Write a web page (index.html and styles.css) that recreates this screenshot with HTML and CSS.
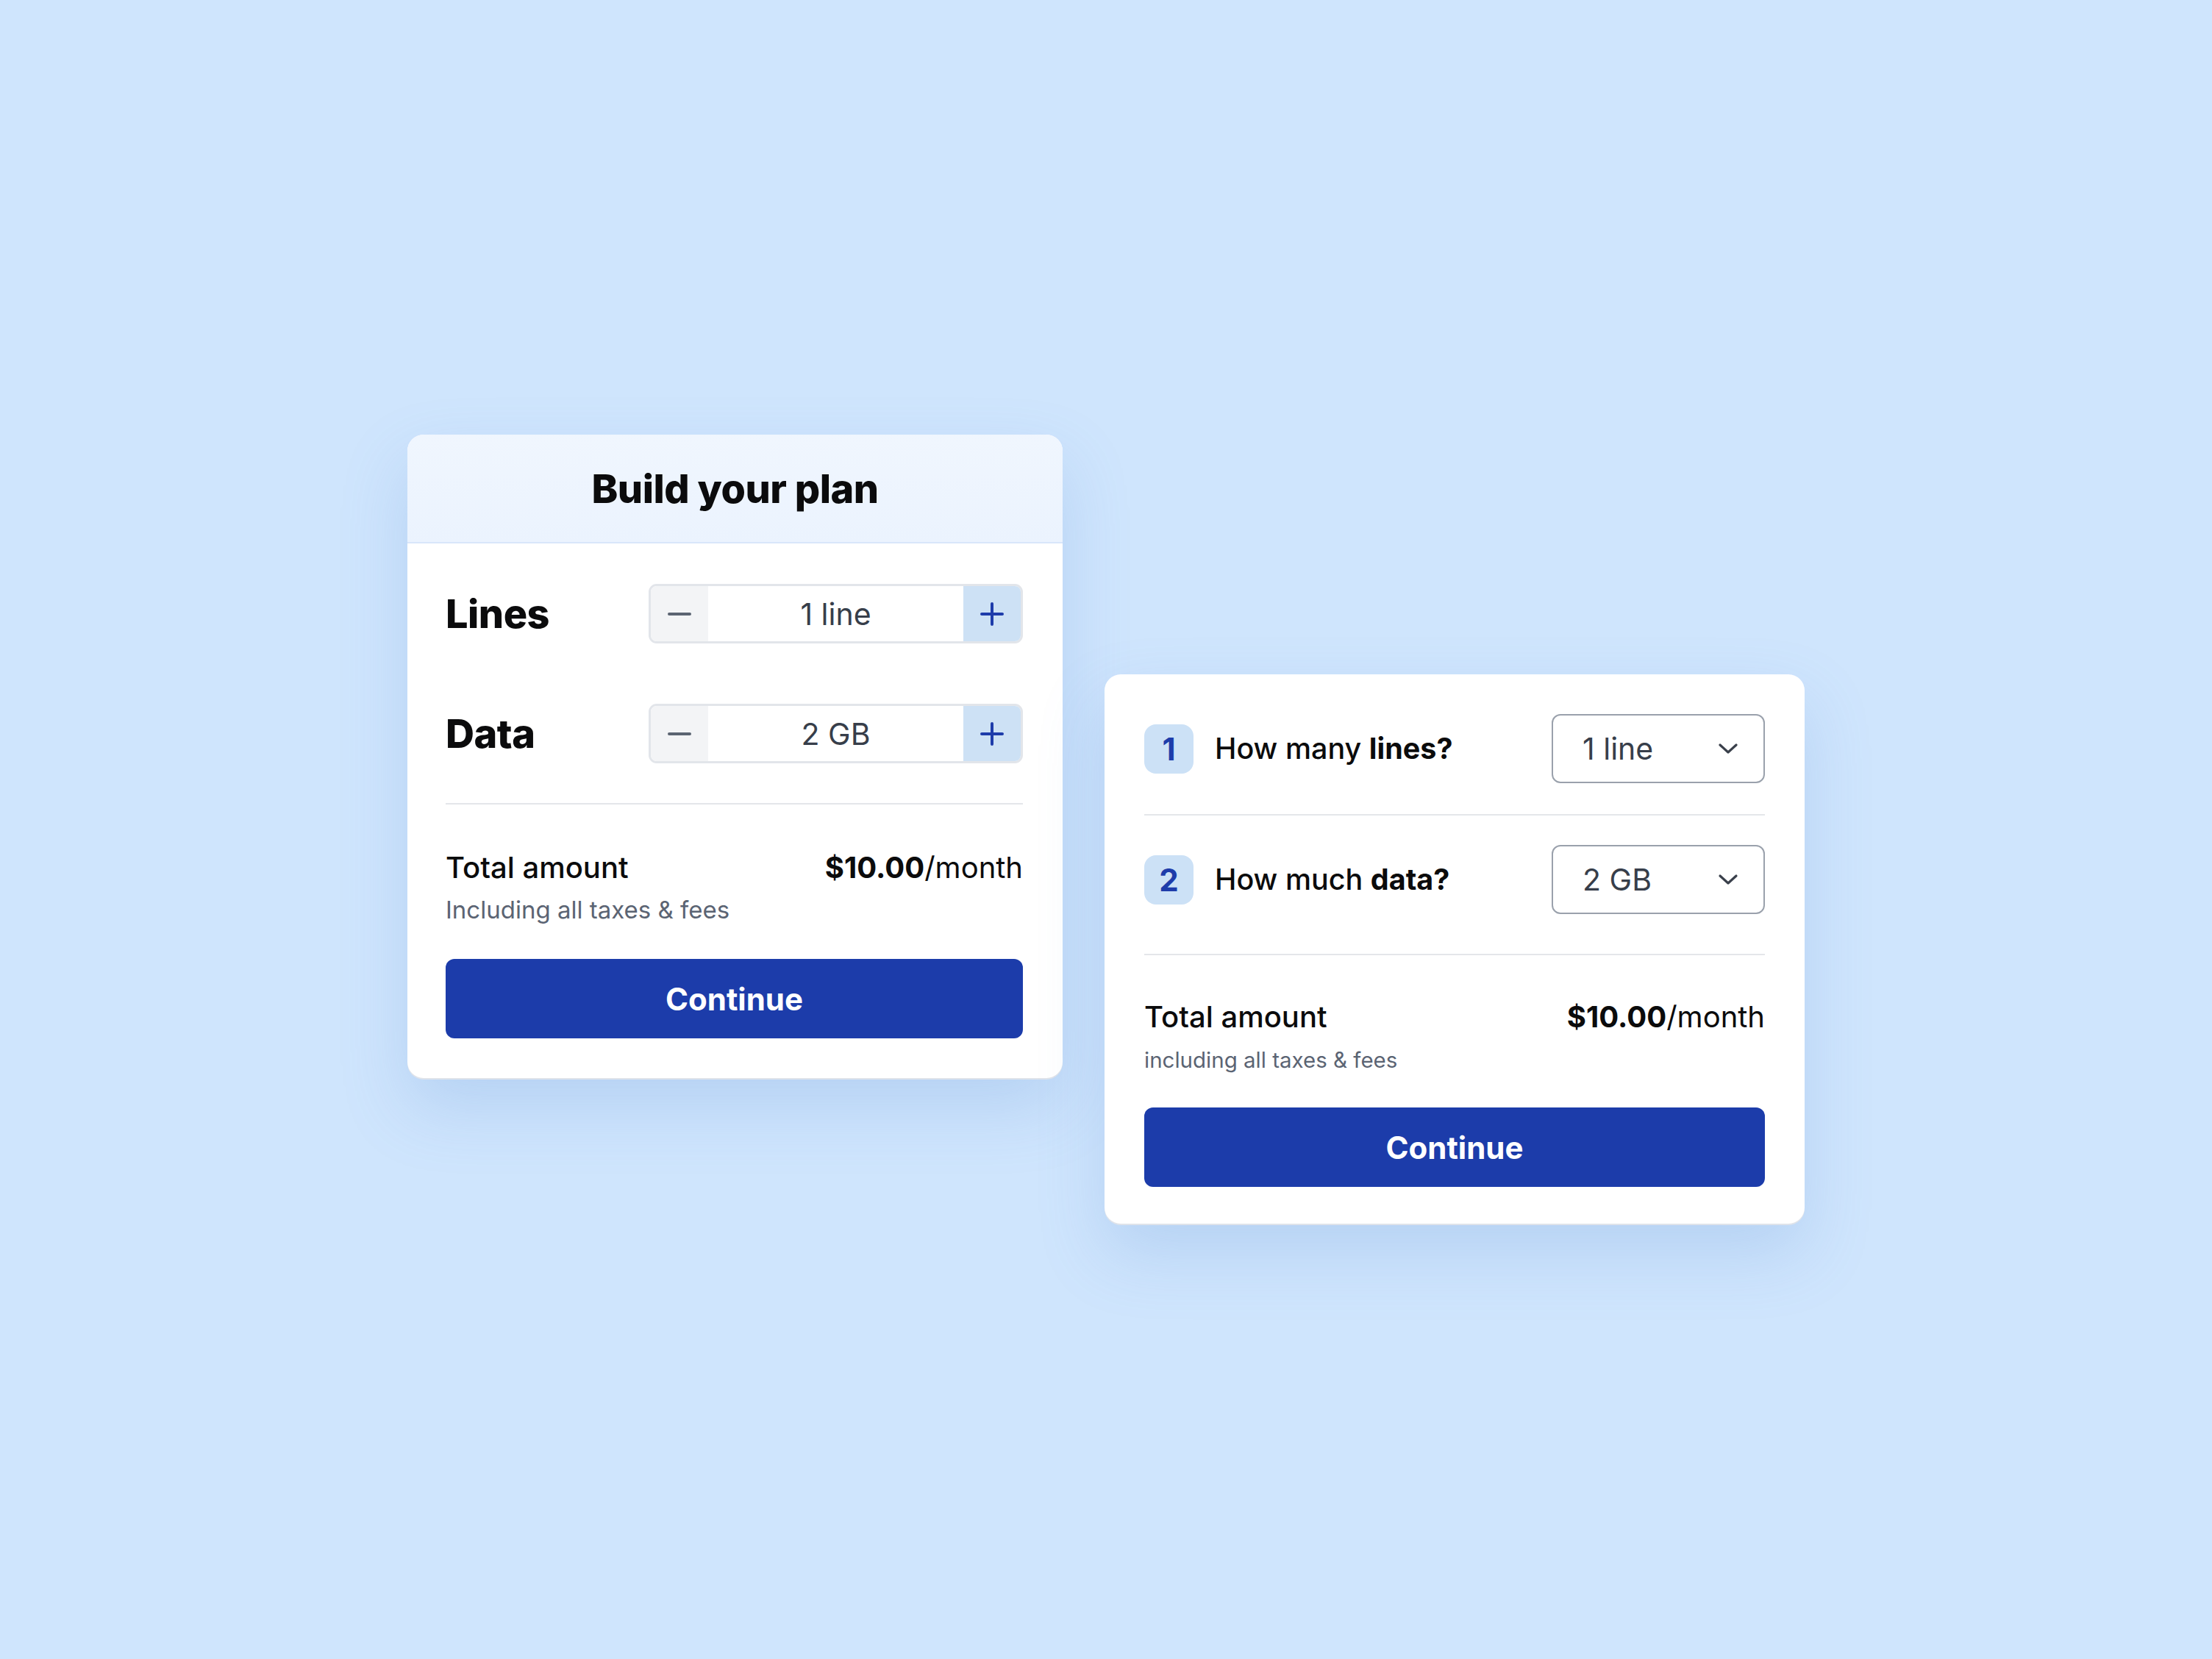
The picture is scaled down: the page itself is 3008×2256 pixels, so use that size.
FILE: index.html
```html
<!DOCTYPE html>
<html lang="en">
<head>
    <meta charset="UTF-8">
    <meta name="viewport" content="width=device-width, initial-scale=1.0">
    <title>Build your plan</title>
    <link rel="stylesheet" href="styles.css">
</head>
<body>
    <div class="stage">
        <!-- stepper version -->
        <div class="card plan-card">
            <div class="plan-header">
                <h2>Build your plan</h2>
            </div>
            <div class="plan-body">
                <div class="plan-row">
                    <span class="plan-label">Lines</span>
                    <div class="stepper">
                        <button class="step minus"><span class="bar"></span></button>
                        <span class="step-value">1 line</span>
                        <button class="step plus"><span class="bar"></span><span class="bar vert"></span></button>
                    </div>
                </div>
                <div class="plan-row">
                    <span class="plan-label">Data</span>
                    <div class="stepper">
                        <button class="step minus"><span class="bar"></span></button>
                        <span class="step-value">2 GB</span>
                        <button class="step plus"><span class="bar"></span><span class="bar vert"></span></button>
                    </div>
                </div>
                <hr class="divider">
                <div class="total">
                    <div class="total-line">
                        <span class="total-label">Total amount</span>
                        <span class="total-price"><b>$10.00</b>/month</span>
                    </div>
                    <p class="total-note">Including all taxes &amp; fees</p>
                </div>
                <button class="continue">Continue</button>
            </div>
        </div>

        <!-- dropdown version -->
        <div class="card steps-card">
            <div class="q-row">
                <span class="badge">1</span>
                <span class="q-text">How many <b>lines?</b></span>
                <div class="select">
                    <span>1 line</span>
                    <svg width="28" height="16" viewBox="0 0 28 16"><path d="M3 3 L14 13 L25 3" fill="none" stroke="#3a404b" stroke-width="3.2" stroke-linecap="round" stroke-linejoin="round"/></svg>
                </div>
            </div>
            <hr class="divider q-divider">
            <div class="q-row">
                <span class="badge">2</span>
                <span class="q-text">How much <b>data?</b></span>
                <div class="select">
                    <span>2 GB</span>
                    <svg width="28" height="16" viewBox="0 0 28 16"><path d="M3 3 L14 13 L25 3" fill="none" stroke="#3a404b" stroke-width="3.2" stroke-linecap="round" stroke-linejoin="round"/></svg>
                </div>
            </div>
            <hr class="divider q-divider last">
            <div class="total">
                <div class="total-line">
                    <span class="total-label">Total amount</span>
                    <span class="total-price"><b>$10.00</b>/month</span>
                </div>
                <p class="total-note small">including all taxes &amp; fees</p>
            </div>
            <button class="continue">Continue</button>
        </div>
    </div>
</body>
</html>
```

FILE: styles.css
```css
body {
    font-family: 'Inter', 'Noto Sans', sans-serif;
    background-color: #cfe5fd;
    color: #0b0b0c;
    margin: 0;
}
.stage {
    min-height: 2256px;
    display: flex;
    justify-content: center;
    align-items: center;
    gap: 57px;
}
.card {
    background-color: #ffffff;
    border-radius: 22px;
    box-shadow: 0 2px 0 #dfe3ea, 0 40px 90px rgba(90, 140, 210, 0.22);
    box-sizing: border-box;
}

/* ---- stepper card ---- */
.plan-card {
    width: 891px;
    align-self: flex-start;
    margin-top: 591px;
    overflow: hidden;
}
.plan-header {
    height: 146px;
    background: linear-gradient(#f0f6fe, #ebf3fe);
    border-bottom: 2px solid #d9e6fa;
    display: flex;
    align-items: center;
    justify-content: center;
}
.plan-header h2 {
    margin: 0;
    font-size: 54px;
    font-weight: 800;
    letter-spacing: -0.5px;
}
.plan-body {
    padding: 55px 54px 54px 52px;
}
.plan-row {
    display: flex;
    align-items: center;
    justify-content: space-between;
    margin-bottom: 82px;
}
.plan-row:nth-child(2) {
    margin-bottom: 54px;
}
.plan-label {
    font-size: 54px;
    font-weight: 800;
    letter-spacing: -0.5px;
}
.stepper {
    width: 509px;
    height: 81px;
    box-sizing: border-box;
    border: 3px solid #e2e5ea;
    border-radius: 11px;
    overflow: hidden;
    display: flex;
    align-items: stretch;
}
.step {
    width: 78px;
    border: none;
    padding: 0;
    position: relative;
    cursor: pointer;
}
.step.minus {
    background-color: #f3f4f6;
}
.step.plus {
    background-color: #cde1f5;
}
.bar {
    position: absolute;
    left: 50%;
    top: 50%;
    width: 32px;
    height: 4px;
    margin: -2px 0 0 -16px;
    border-radius: 2px;
    background-color: #5b6472;
}
.plus .bar {
    background-color: #1e3caa;
}
.bar.vert {
    width: 4px;
    height: 32px;
    margin: -16px 0 0 -2px;
}
.step-value {
    flex: 1;
    display: flex;
    align-items: center;
    justify-content: center;
    font-size: 41px;
    color: #373e4a;
}
.divider {
    border: none;
    height: 2px;
    background-color: #e4e6ea;
    margin: 0;
}
.total {
    margin-top: 62px;
}
.total-line {
    display: flex;
    justify-content: space-between;
    align-items: baseline;
    font-size: 40px;
    line-height: 48px;
}
.total-label {
    font-weight: 500;
}
.total-price b {
    font-weight: 700;
}
.total-note {
    margin: 13px 0 0;
    font-size: 33px;
    line-height: 40px;
    color: #5b6473;
}
.total-note.small {
    margin-top: 16px;
    font-size: 29.5px;
    line-height: 36px;
}
.continue {
    display: block;
    width: 100%;
    height: 108px;
    margin-top: 47px;
    background-color: #1c3caa;
    color: #ffffff;
    border: none;
    border-radius: 12px;
    font-family: inherit;
    font-size: 42px;
    font-weight: 700;
    cursor: pointer;
}

/* ---- dropdown card ---- */
.steps-card {
    width: 952px;
    align-self: flex-start;
    margin-top: 917px;
    padding: 54px 54px 50px;
}
.q-row {
    display: flex;
    align-items: center;
}
.badge {
    width: 67px;
    height: 67px;
    border-radius: 16px;
    background-color: #cce1f6;
    color: #1e3caa;
    font-size: 42px;
    font-weight: 700;
    display: flex;
    align-items: center;
    justify-content: center;
}
.q-text {
    flex: 1;
    margin-left: 29px;
    font-size: 39.5px;
    font-weight: 500;
}
.q-text b {
    font-weight: 700;
}
.select {
    width: 290px;
    height: 94px;
    box-sizing: border-box;
    border: 2px solid #9aa1ac;
    border-radius: 12px;
    padding: 0 34px 0 40px;
    display: flex;
    align-items: center;
    justify-content: space-between;
    font-size: 41px;
    color: #373e4a;
}
.q-divider {
    margin: 42px 0 40px;
}
.q-divider.last {
    margin: 54px 0 0;
}
.steps-card .total {
    margin-top: 60px;
}
```
